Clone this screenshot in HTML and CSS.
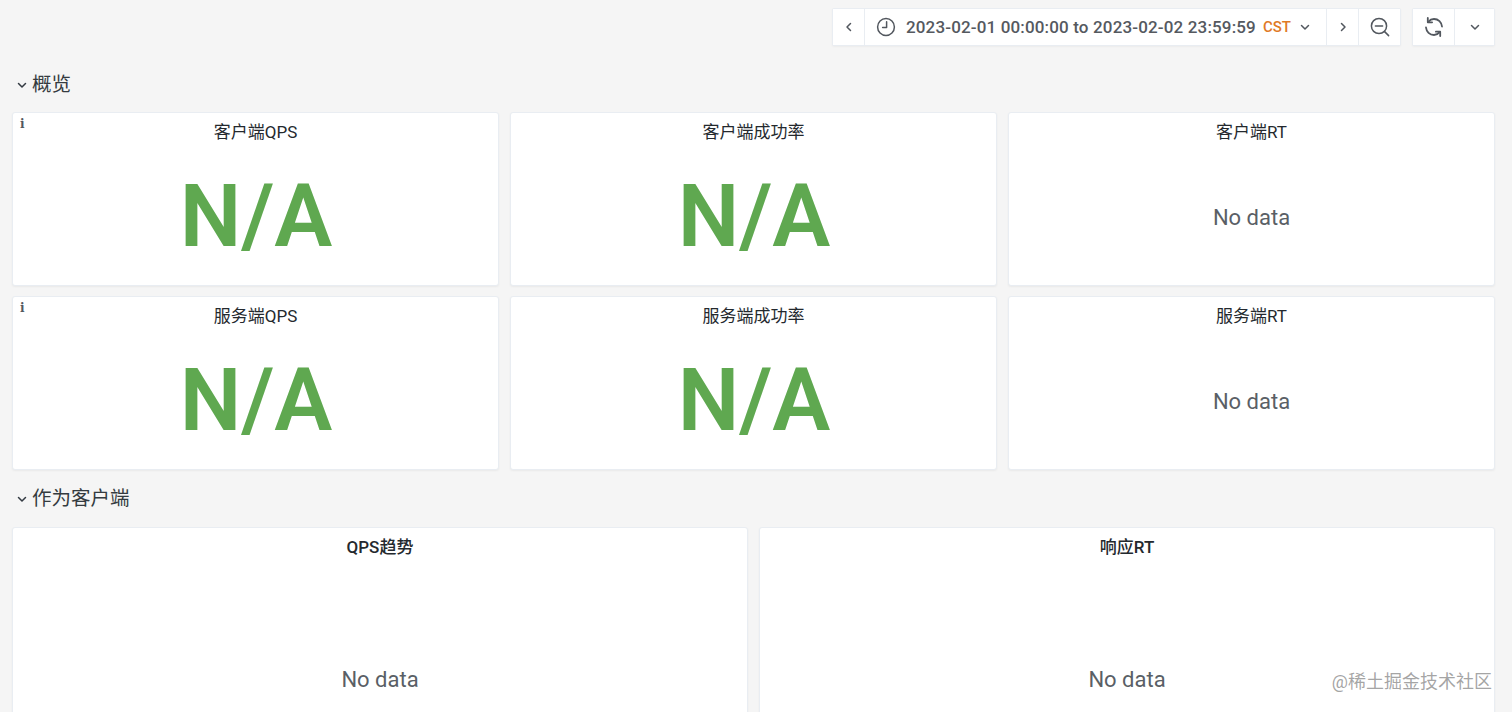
FILE: index.html
```html
<!DOCTYPE html>
<html lang="zh">
<head>
<meta charset="utf-8">
<title>Dashboard</title>
<link rel="stylesheet" href="styles.css">
</head>
<body>
<div class="page">
  <header class="toolbar">
    <div class="btn-group">
      <button class="tb-btn prev"><svg width="12" height="12" viewBox="0 0 12 12"><path class="ic" d="M7.500 2.500 4 6l3.500 3.500"/></svg></button>
      <button class="tb-btn range">
        <svg class="clock" width="20" height="20" viewBox="0 0 20 20"><circle class="ic" cx="10" cy="10" r="8.400"/><path class="ic" d="M10.600 4.800v5.800H6.600"/></svg>
        <span class="range-text">2023-02-01 00:00:00 to 2023-02-02 23:59:59</span>
        <span class="tz">CST</span>
        <svg width="12" height="12" viewBox="0 0 12 12"><path class="ic" d="M2.500 4.500 6 8l3.500-3.500"/></svg>
      </button>
      <button class="tb-btn next"><svg width="12" height="12" viewBox="0 0 12 12"><path class="ic" d="M4.500 2.500 8 6l-3.500 3.500"/></svg></button>
      <button class="tb-btn zoom"><svg width="22" height="22" viewBox="0 0 22 22"><circle class="ic" cx="10" cy="10" r="7.600"/><path class="ic" d="M6.400 10h7.200M15.600 15.600l4 4"/></svg></button>
    </div>
    <div class="btn-group">
      <button class="tb-btn refresh"><svg width="20" height="22" viewBox="0 0 20 22"><path class="ic sync" d="M18 10.500C17.600 6.300 14.300 3 10 3 7.800 3 5.800 4 4.300 5.800M2 11.500C2.400 15.700 5.700 19 10 19c2.200 0 4.200-1 5.700-2.800"/><path class="ic sync" d="M3.800 2v4.300h4.300M16.200 20v-4.300h-4.300"/></svg></button>
      <button class="tb-btn more"><svg width="12" height="12" viewBox="0 0 12 12"><path class="ic" d="M2.500 4.500 6 8l3.500-3.500"/></svg></button>
    </div>
  </header>

  <section class="row-head first">
    <svg width="10" height="10" viewBox="0 0 10 10"><path class="row-ic" d="M1.500 3.500 5 7l3.500-3.500"/></svg>
    <h2>概览</h2>
  </section>
  <div class="grid-three">
    <article class="panel stat"><span class="info">i</span><h3>客户端QPS</h3><div class="big">N/A</div></article>
    <article class="panel stat"><h3>客户端成功率</h3><div class="big">N/A</div></article>
    <article class="panel stat"><h3>客户端RT</h3><div class="nodata">No data</div></article>
    <article class="panel stat"><span class="info">i</span><h3>服务端QPS</h3><div class="big">N/A</div></article>
    <article class="panel stat"><h3>服务端成功率</h3><div class="big">N/A</div></article>
    <article class="panel stat"><h3>服务端RT</h3><div class="nodata">No data</div></article>
  </div>

  <section class="row-head second">
    <svg width="10" height="10" viewBox="0 0 10 10"><path class="row-ic" d="M1.500 3.500 5 7l3.500-3.500"/></svg>
    <h2>作为客户端</h2>
  </section>
  <div class="grid-two">
    <article class="panel chart"><h3>QPS趋势</h3><div class="nodata">No data</div></article>
    <article class="panel chart"><h3>响应RT</h3><div class="nodata">No data</div></article>
  </div>
</div>
<div class="watermark">@稀土掘金技术社区</div>
</body>
</html>
```

FILE: styles.css
```css
* { box-sizing: border-box; }
html, body { margin: 0; height: 712px; overflow: hidden; }
body {
  background: #f5f5f5;
  font-family: Roboto, "Noto Sans CJK SC", sans-serif;
  color: #464c54;
}
.page { padding: 8px 17px 0 12px; height: 712px; overflow: hidden; }

.toolbar { display: flex; justify-content: flex-end; gap: 11px; height: 38px; }
.btn-group {
  display: flex;
  background: #fff;
  border: 1px solid #e9edf2;
  border-radius: 2px;
  box-shadow: 0 1px 2px rgba(0,0,0,.04);
}
.tb-btn {
  display: flex;
  align-items: center;
  justify-content: center;
  height: 100%;
  padding: 0;
  background: #fff;
  border: 0;
  border-left: 1px solid #e9edf2;
  color: #464c54;
  font: inherit;
}
.tb-btn:first-child { border-left: 0; }
.prev { width: 31px; }
.next { width: 32px; }
.range { width: 462px; justify-content: flex-start; padding: 0 0 1px 11px; }
.clock { margin-right: 10px; }
.range-text { font-size: 17px; font-weight: 500; letter-spacing: .15px; white-space: nowrap; color: #55595f; }
.tz { margin: 0 8px 0 7px; font-size: 15px; font-weight: 500; color: #df7a26; }
.zoom { width: 42px; }
.refresh { width: 41px; }
.more { width: 40px; }
.ic { fill: none; stroke: #52575e; stroke-width: 1.500; stroke-linecap: round; stroke-linejoin: round; }
.sync { stroke-width: 1.800; }

.row-head { display: flex; align-items: center; gap: 5px; padding-left: 5px; color: #333a42; }
.row-head.first { height: 28px; margin-top: 25px; }
.row-head.second { height: 28px; margin-top: 15px; }
.row-head h2 { margin: 0; font-size: 19.500px; font-weight: 400; line-height: 28px; color: #343b40; }
.row-ic { fill: none; stroke: #333a42; stroke-width: 1.500; stroke-linecap: round; stroke-linejoin: round; }

.grid-three { display: grid; grid-template-columns: repeat(3, 1fr); column-gap: 11px; row-gap: 10px; margin-top: 13px; }
.grid-two { display: grid; grid-template-columns: repeat(2, 1fr); column-gap: 11px; margin-top: 14px; }

.panel {
  position: relative;
  display: flex;
  flex-direction: column;
  background: #fff;
  border: 1px solid #e9edf2;
  border-radius: 3px;
  box-shadow: 0 1px 2px rgba(0,0,0,.05);
}
.stat { height: 174px; }
.chart { height: 240px; }
.panel h3 {
  margin: 0;
  padding-top: 8px;
  height: 34px;
  font-size: 17px;
  font-weight: 400;
  line-height: 22px;
  text-align: center;
  color: #24292e;
}
.chart h3 { font-weight: 500; }
.info {
  position: absolute;
  left: 7px;
  top: 4px;
  font-family: "DejaVu Serif", serif;
  font-size: 12px;
  font-weight: 700;
  line-height: 14px;
  color: #52575e;
}
.big {
  flex: 1;
  display: flex;
  align-items: center;
  justify-content: center;
  padding: 1px 0 0 1px;
  font-size: 87px;
  font-weight: 600;
  line-height: 1;
  color: #5fa850;
}
.nodata {
  flex: 1;
  display: flex;
  align-items: center;
  justify-content: center;
  padding-top: 3px;
  font-size: 22px;
  color: #5a5f66;
}
.chart .nodata { align-items: flex-start; padding-top: 105px; }

.watermark {
  position: absolute;
  right: 20px;
  top: 671px;
  font-size: 18px;
  line-height: 22px;
  color: rgba(125,125,125,.7);
}
```
